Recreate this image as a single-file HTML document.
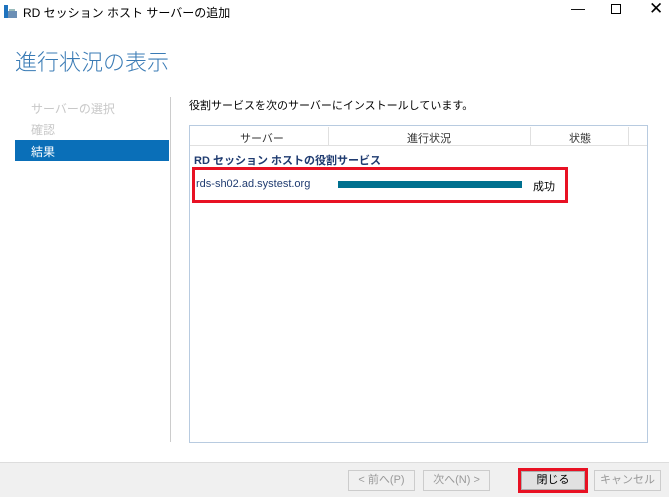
<!DOCTYPE html>
<html><head><meta charset="utf-8"><style>
*{margin:0;padding:0;box-sizing:border-box}
body{width:669px;height:497px;background:#fff;position:relative;overflow:hidden;font-family:"Liberation Sans","Noto Sans CJK JP",sans-serif;font-size:11px;color:#000}
.a{position:absolute;white-space:nowrap}
.btn{position:absolute;height:21px;border:1px solid #adadad;background:#e1e1e1;text-align:center;line-height:19px;font-size:11px}
</style></head><body>
<svg class="a" style="left:4px;top:5px" width="13" height="13" viewBox="0 0 13 13"><rect x="0" y="0" width="4" height="13" fill="#1e73be"/><rect x="4" y="6" width="9" height="7" fill="#6b8fb5"/><rect x="5" y="4" width="6" height="2" fill="#9bb"/></svg>
<div class="a" style="left:23px;top:4px;font-size:12px">RD セッション ホスト サーバーの追加</div>
<div class="a" style="left:571px;top:0;font-size:14px">—</div>
<div class="a" style="left:611px;top:4px;width:10px;height:10px;border:1px solid #000"></div>
<div class="a" style="left:649px;top:-1px;font-size:17px">✕</div>
<div class="a" style="left:15px;top:45px;font-size:22px;color:#3a7bb5;font-weight:300">進行状況の表示</div>
<div class="a" style="left:31px;top:100px;color:#c8c8c8;font-size:12px">サーバーの選択</div>
<div class="a" style="left:31px;top:121px;color:#c8c8c8;font-size:12px">確認</div>
<div class="a" style="left:15px;top:140px;width:154px;height:21px;background:#0a6fb8"></div>
<div class="a" style="left:31px;top:143px;color:#fff;font-size:12px">結果</div>
<div class="a" style="left:170px;top:97px;width:1px;height:345px;background:#ccc"></div>
<div class="a" style="left:189px;top:97px">役割サービスを次のサーバーにインストールしています。</div>
<div class="a" style="left:189px;top:125px;width:459px;height:318px;border:1px solid #b8cbe0;background:#fff"></div>
<div class="a" style="left:190px;top:126px;width:457px;height:20px;border-bottom:1px solid #e0e0e0"></div>
<div class="a" style="left:328px;top:127px;width:1px;height:18px;background:#e0e0e0"></div>
<div class="a" style="left:530px;top:127px;width:1px;height:18px;background:#e0e0e0"></div>
<div class="a" style="left:628px;top:127px;width:1px;height:18px;background:#e0e0e0"></div>
<div class="a" style="left:240px;top:130px;color:#333">サーバー</div>
<div class="a" style="left:407px;top:130px;color:#333">進行状況</div>
<div class="a" style="left:569px;top:130px;color:#333">状態</div>
<div class="a" style="left:194px;top:152px;color:#1f3b70;font-weight:bold">RD セッション ホストの役割サービス</div>
<div class="a" style="left:192px;top:167px;width:376px;height:36px;border:3px solid #e81123"></div>
<div class="a" style="left:196px;top:178px;color:#1f3b70">rds-sh02.ad.systest.org</div>
<div class="a" style="left:338px;top:181px;width:184px;height:7px;background:#00708f"></div>
<div class="a" style="left:533px;top:178px">成功</div>
<div class="a" style="left:0;top:462px;width:669px;height:35px;background:#f0f0f0;border-top:1px solid #ddd"></div>
<div class="btn" style="left:348px;top:470px;width:67px;color:#999;border-color:#ccc;background:#f0f0f0">&lt; 前へ(P)</div>
<div class="btn" style="left:423px;top:470px;width:67px;color:#999;border-color:#ccc;background:#f0f0f0">次へ(N) &gt;</div>
<div class="a" style="left:518px;top:468px;width:70px;height:25px;border:3px solid #e81123"></div>
<div class="btn" style="left:521px;top:471px;width:64px;height:19px;line-height:17px;border-color:#adadad">閉じる</div>
<div class="btn" style="left:594px;top:470px;width:67px;color:#999;border-color:#ccc;background:#f0f0f0">キャンセル</div>
</body></html>
